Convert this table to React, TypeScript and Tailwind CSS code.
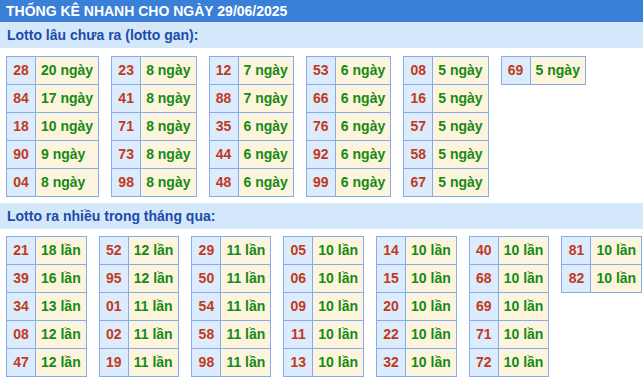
import React from 'react';

type Row = [string, string];

const GAN: Row[][] = [
  [['28', '20 ngày'], ['84', '17 ngày'], ['18', '10 ngày'], ['90', '9 ngày'], ['04', '8 ngày']],
  [['23', '8 ngày'], ['41', '8 ngày'], ['71', '8 ngày'], ['73', '8 ngày'], ['98', '8 ngày']],
  [['12', '7 ngày'], ['88', '7 ngày'], ['35', '6 ngày'], ['44', '6 ngày'], ['48', '6 ngày']],
  [['53', '6 ngày'], ['66', '6 ngày'], ['76', '6 ngày'], ['92', '6 ngày'], ['99', '6 ngày']],
  [['08', '5 ngày'], ['16', '5 ngày'], ['57', '5 ngày'], ['58', '5 ngày'], ['67', '5 ngày']],
  [['69', '5 ngày']],
];

const NHIEU: Row[][] = [
  [['21', '18 lần'], ['39', '16 lần'], ['34', '13 lần'], ['08', '12 lần'], ['47', '12 lần']],
  [['52', '12 lần'], ['95', '12 lần'], ['01', '11 lần'], ['02', '11 lần'], ['19', '11 lần']],
  [['29', '11 lần'], ['50', '11 lần'], ['54', '11 lần'], ['58', '11 lần'], ['98', '11 lần']],
  [['05', '10 lần'], ['06', '10 lần'], ['09', '10 lần'], ['11', '10 lần'], ['13', '10 lần']],
  [['14', '10 lần'], ['15', '10 lần'], ['20', '10 lần'], ['22', '10 lần'], ['32', '10 lần']],
  [['40', '10 lần'], ['68', '10 lần'], ['69', '10 lần'], ['71', '10 lần'], ['72', '10 lần']],
  [['81', '10 lần'], ['82', '10 lần']],
];

const LottoTable = ({ rows }: { rows: Row[] }) => (
  <div className="grid grid-cols-[29px_auto] auto-rows-[28px] shrink-0 self-start whitespace-nowrap border-l border-t border-[#85acec]">
    {rows.map(([num, val]) => (
      <React.Fragment key={num}>
        <div className="flex items-center justify-center border-r border-b border-[#85acec] bg-[#dcecfd] text-[#c23a1c]">
          {num}
        </div>
        <div className="flex items-center px-[5px] border-r border-b border-[#85acec] bg-[#fdf4de] text-[#168a14]">
          {val}
        </div>
      </React.Fragment>
    ))}
  </div>
);

const SectionBar = ({ title }: { title: string }) => (
  <div className="h-[26px] flex items-center px-[7px] bg-[#d5e7fa] text-[#1b4ca9] text-[14px] font-bold">
    {title}
  </div>
);

export default function App() {
  return (
    <div className="w-[643px] h-[381px] bg-white overflow-hidden" style={{ fontFamily: '"Liberation Sans", Arial, sans-serif' }}>
      <div className="h-[22px] flex items-center px-[6px] bg-[#3a7fd8] text-white text-[14px] font-bold">
        THỐNG KÊ NHANH CHO NGÀY 29/06/2025
      </div>
      <SectionBar title="Lotto lâu chưa ra (lotto gan):" />
      <div className="flex gap-[12px] pl-[6px] pt-[8px] text-[14px] font-bold">
        {GAN.map((t, i) => <LottoTable key={i} rows={t} />)}
      </div>
      <div className="mt-[6px]">
        <SectionBar title="Lotto ra nhiều trong tháng qua:" />
      </div>
      <div className="flex gap-[12px] pl-[6px] pt-[7px] text-[14px] font-bold">
        {NHIEU.map((t, i) => <LottoTable key={i} rows={t} />)}
      </div>
    </div>
  );
}
